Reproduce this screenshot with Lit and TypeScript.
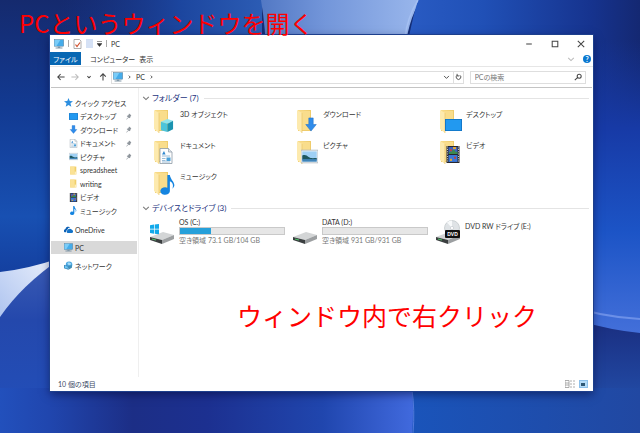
import { LitElement, html, svg, css, nothing } from "lit";
import { customElement, property } from "lit/decorators.js";
import { classMap } from "lit/directives/class-map.js";
import { styleMap } from "lit/directives/style-map.js";

const note = svg`<path fill="#1484e0" d="M7.500 0v10.200A3.800 3 0 1 0 9.500 13V5c2.400 1.200 3 3 2 6C15.800 7 10 4.500 9.500 0z"/>`;
const arrow = svg`<path fill="#2f8ceb" stroke="#1f6fc8" stroke-width=".6" d="M5.500 1h5v7H14l-6 7-6-7h3.500z"/>`;
const film = svg`
  <rect x="1.500" y="0" width="13" height="16" fill="#26262e"/>
  <path d="M2.500.500v15M13.500.500v15" stroke="#c9c9c0" stroke-width="1" stroke-dasharray="1 1.200"/>
  <rect x="3.500" y="1" width="9" height="6.500" fill="#3a62c4"/><rect x="3.500" y="8.500" width="9" height="6.500" fill="#3b78d8"/>
  <path d="M4 5.500h3V4h3v1.500h2.500v2H4z" fill="#3c8a4c"/><path d="M8 1h3v2H8zM5 12h2v2H5z" fill="#d9a33c"/>
  <path d="M5 3h2v2H5zM9 10h2v2H9z" fill="#c3453d"/>`;
const picture = svg`
  <rect x="0" y="2" width="16" height="12" fill="#f4f6f8" stroke="#a9b2ba" stroke-width=".7"/>
  <rect x="1.200" y="3.200" width="13.600" height="9.600" fill="#9fd0f5"/>
  <path d="M1.200 7c3-1 4 0 6 1.500s4 1 7.600 1v1.500H1.200z" fill="#1f5860"/><path d="M1.200 10.500h13.600v2.300H1.200z" fill="#3f83b8"/>`;
const page = svg`
  <path d="M2 .5h8.500L14 4v11.500H2z" fill="#fdfdfd" stroke="#8d9aa6" stroke-width=".8"/>
  <path d="M10.500.5V4H14" fill="#dfe6ec" stroke="#8d9aa6" stroke-width=".7"/>
  <path d="M4 6.500L6 3l1.500 3.500z" fill="#2d86cf"/><path d="M4 8h8M4 10.500h3.500M4 12.500h3.500M4 14h8" stroke="#8fb4d4" stroke-width=".9"/>
  <rect x="8.500" y="9.500" width="4" height="3.500" fill="#4aa0d8"/>`;
const yellow = svg`<path fill="#f0cf6a" d="M2 1h11v14H2z"/><path fill="#fbe295" d="M2 1h8v14H2z"/><path fill="#fdeebb" d="M10 10h3v5h-3z"/>`;
const monitor = svg`
  <rect x=".5" y="1" width="15" height="10.500" fill="#45acea" stroke="#5b7f98" stroke-width=".8"/>
  <path d="M1 1.500h9L4 11H1z" fill="#7accf8"/><path d="M6 12h4v1.500h3.500V15h-11v-1.500H6z" fill="#8298a8"/>`;
const desktop = svg`<rect x="0" y="2" width="16" height="12" fill="#1173c4"/><rect x=".8" y="2.800" width="14.400" height="10.400" fill="#2299f0"/>`;
const cube = svg`<path fill="#8fe4ee" d="M2 4l7-3 6 2-6 3z"/><path fill="#4cc4da" d="M2 4l7 2v9l-7-2z"/><path fill="#1b93b0" d="M9 6l6-3v9l-6 3z"/>`;
const star = svg`<path fill="#2d8fe0" d="M8 0l2.200 5.300 5.800.4-4.500 3.800L13 15.500l-5-3.200-5 3.200 1.500-6L0 5.700l5.800-.4z"/>`;
const cloud = svg`<path fill="#0c5fb4" d="M1 13a3.500 3.500 0 0 1 1.500-6A5 5 0 0 1 11 4.500a5 5 0 0 0-5 4A4 4 0 0 0 4 13z"/><path fill="#1473c8" d="M6 14a3 3 0 0 1 .5-5A4.500 4.500 0 0 1 14 8.600 2.900 2.900 0 0 1 14.500 14z"/>`;
const network = svg`<circle cx="9" cy="6.500" r="5.800" fill="#4ba7e0"/><path d="M6 3.500c3-2 5 0 7 1l-2 3-4-1z" fill="#a3dbf8"/><path d="M0 7l8 2v6.500L0 13z" fill="#2e7fb4"/><path d="M1.200 8.500l5.600 1.400v3.800l-5.600-1.400z" fill="#6fc6f2"/><path d="M8 9l6-2v5l-6 3.500z" fill="#3f8eb8"/>`;

const glyphs: Record<string, unknown> = { note, arrow, film, picture, page, yellow, monitor, desktop, cube, star, cloud, network };

@customElement("file-icon")
class FileIcon extends LitElement {
  @property() name = "page";
  static styles = css`
    :host { display: inline-flex; flex: none; width: 9px; height: 9px; }
    svg { width: 100%; height: 100%; display: block; }
  `;
  render() {
    return html`<svg viewBox="0 0 16 16" preserveAspectRatio="none" aria-hidden="true">${glyphs[this.name]}</svg>`;
  }
}

/* Where each badge lies on the folder: x, y, width, height. */
const badges: Record<string, number[]> = {
  cube: [7, 9, 15, 15],
  arrow: [9, 8, 14, 15],
  desktop: [7, 8, 17, 16],
  page: [6, 8, 16, 16],
  picture: [6, 8, 17, 17],
  film: [7, 6, 16, 17],
  note: [6, 4, 20, 20],
};

@customElement("folder-icon")
class FolderIcon extends LitElement {
  @property() name = "page";
  static styles = css`
    :host { display: block; flex: none; width: 24px; height: 25px; }
    svg { display: block; }
  `;
  render() {
    const [x, y, w, h] = badges[this.name];
    return html`<svg width="24" height="25" viewBox="0 0 24 25" aria-hidden="true">
      <path d="M3 1h13v21H3z" fill="#efcc6c"/>
      <path d="M3 1l12 1v19H6z" fill="#f9dd8c"/>
      <path d="M2 1l5 3v20l-5-4z" fill="#fdeaae"/>
      <path d="M7 4v20" stroke="#e8c467" stroke-width=".7"/>
      <svg x=${x} y=${y} width=${w} height=${h} viewBox="0 0 16 16" preserveAspectRatio="none">${glyphs[this.name]}</svg>
    </svg>`;
  }
}

@customElement("drive-icon")
class DriveIcon extends LitElement {
  @property() kind = "plain";
  static styles = css`
    :host { display: block; flex: none; width: 26px; height: 25px; }
    svg { display: block; }
    .disc { font: bold 5px "Liberation Sans", sans-serif; fill: #fff; }
  `;
  render() {
    return html`<svg width="26" height="25" viewBox="0 0 26 25" aria-hidden="true">
      <path d="M1 17l13-5 11 3-12 5z" fill="#d3d5d6"/>
      <path d="M1 17l12 3v4L1 20z" fill="#3b3f40"/>
      <path d="M13 20l12-5v4l-12 5z" fill="#9c9fa1"/>
      <path d="M3 19l4 1" stroke="#4ec46a" stroke-width="1"/>
      ${this.kind === "system" ? svg`<path fill="#12a9ea" d="M1 5.200l4-.6v4.200H1zM5.700 4.500L10 4v4.800H5.700zM1 9.500h4v4.200l-4-.6zM5.700 9.500H10v4.800l-4.300-.5z"/>` : nothing}
      ${this.kind === "dvd" ? svg`
        <circle cx="17" cy="8" r="7.500" fill="#dfe3e6" stroke="#b6bcc0" stroke-width=".6"/>
        <path d="M17 8L12 2.500a7 7 0 0 1 5-2z" fill="#f8fafb"/>
        <circle cx="17" cy="8" r="1.600" fill="#fff" stroke="#b6bcc0" stroke-width=".5"/>
        <rect x="10" y="10" width="15" height="8" rx="1" fill="#111"/>
        <text class="disc" x="17.500" y="16" text-anchor="middle">DVD</text>` : nothing}
    </svg>`;
  }
}

interface Place { label: string; icon: string; pinned?: boolean }

const places: Place[] = [
  { label: "デスクトップ", icon: "desktop", pinned: true },
  { label: "ダウンロード", icon: "arrow", pinned: true },
  { label: "ドキュメント", icon: "page", pinned: true },
  { label: "ピクチャ", icon: "picture", pinned: true },
  { label: "spreadsheet", icon: "yellow" },
  { label: "writing", icon: "yellow" },
  { label: "ビデオ", icon: "film" },
  { label: "ミュージック", icon: "note" },
];

const folders: Place[] = [
  { label: "3D オブジェクト", icon: "cube" },
  { label: "ダウンロード", icon: "arrow" },
  { label: "デスクトップ", icon: "desktop" },
  { label: "ドキュメント", icon: "page" },
  { label: "ピクチャ", icon: "picture" },
  { label: "ビデオ", icon: "film" },
  { label: "ミュージック", icon: "note" },
];

const drives = [
  { label: "OS (C:)", kind: "system", used: 30, free: "空き領域 73.1 GB/104 GB" },
  { label: "DATA (D:)", kind: "plain", used: 0, free: "空き領域 931 GB/931 GB" },
  { label: "DVD RW ドライブ (E:)", kind: "dvd" },
];

const line = (d: string) => html`<svg class="line" viewBox="0 0 10 10" aria-hidden="true"><path d=${d}/></svg>`;
const chevron = "M1.500 3.500L5 7l3.500-3.500";

@customElement("app-root")
class AppRoot extends LitElement {
  static styles = css`
    :host {
      display: flex; position: relative; box-sizing: border-box; min-height: 100vh;
      padding: 35px 47px 42px 50px; overflow: hidden; background: #1740a4;
      font: 7px/10px "Lato", "Noto Sans CJK JP", sans-serif; font-feature-settings: "palt"; color: #333;
    }
    * { box-sizing: border-box; }
    button, input { font: inherit; font-feature-settings: inherit; color: inherit; background: none; border: 0; padding: 0; margin: 0; }
    a { color: inherit; text-decoration: none; }
    ul, h2, p { margin: 0; padding: 0; list-style: none; font-weight: 400; }
    .wallpaper { position: absolute; inset: 0; width: 100%; height: 100%; }
    .window {
      position: relative; flex: 1; display: flex; flex-direction: column; background: #fff;
      box-shadow: 0 0 0 1px #1d3f8c, 0 3px 9px rgba(0, 5, 50, .55);
    }
    .line { width: 8px; height: 8px; flex: none; display: block; fill: none; stroke: #444; stroke-width: 1.300; }
    .faint .line { stroke: #bbb; }
    .title { display: flex; align-items: center; height: 17px; padding: 0 4px; }
    .quick { display: flex; align-items: center; gap: 4px; flex: 1; }
    .big { width: 10px; height: 10px; }
    .bar { width: 1px; height: 7px; background: #aaa; }
    .blank { width: 7px; height: 9px; background: #d5e1f5; }
    .controls { display: flex; gap: 18px; padding-right: 4px; }
    .tabs { display: flex; height: 15px; border-bottom: 1px solid #e6e6e6; padding-right: 2px; }
    .tab { padding: 0 4px 0 9px; }
    .file { width: 31px; padding: 0; margin-bottom: 1px; background: #0767b3; color: #fff; }
    .view { padding: 0; }
    .help { display: flex; align-items: center; gap: 8px; margin-left: auto; }
    .round { width: 8px; height: 8px; border-radius: 50%; background: #0a78d0; color: #fff; font-weight: 700; line-height: 8px; text-align: center; }
    .nav { display: flex; align-items: center; height: 21px; padding: 0 6px; border-bottom: 1px solid #c4c4c4; margin: 0 1px; }
    .steps { display: flex; gap: 6px; padding-right: 4px; }
    .address, .search { display: flex; align-items: center; height: 13px; border: 1px solid #dedede; }
    .address { flex: 1; gap: 3px; padding-left: 1px; }
    .address .line { width: 7px; }
    .grow { flex: 1; }
    .reload { align-self: stretch; display: flex; align-items: center; padding: 0 1px; border-left: 1px solid #dedede; }
    .search { width: 22%; margin-left: 6px; padding: 0 3px 0 4px; }
    .search input { flex: 1; min-width: 0; outline: 0; }
    .search input::placeholder { color: #777; opacity: 1; }
    .body { flex: 1; display: flex; }
    .side { width: 89px; flex: none; padding: 8px 1px 0; border-right: 1px solid #efefef; }
    .quicklist { display: grid; grid-auto-rows: 1fr; height: 122px; }
    .place { display: flex; align-items: center; gap: 2px; height: 13px; padding: 0 5px 0 13px; }
    .child { padding-left: 18px; }
    .pin { margin-left: auto; width: 6px; height: 7px; }
    .roots { display: grid; gap: 5px; padding-top: 5px; }
    .current { background: #d9d9d9; }
    .main { flex: 1; min-width: 0; padding: 5px 4px 0 3px; }
    .group { display: flex; align-items: center; gap: 2px; font-size: 8px; color: #26357e; }
    .group .line { stroke: #777; }
    .group::after { content: ""; flex: 1; height: 1px; margin-left: 3px; background: #e4e4e4; }
    .grid { display: grid; grid-template-columns: repeat(3, 1fr); padding: 0 8px 0 10px; }
    .folders { grid-auto-rows: 31px; padding-top: 6px; padding-bottom: 1px; }
    .drives { padding-top: 4px; }
    .item { display: flex; gap: 4px; min-width: 0; }
    .drive { padding-top: 3px; margin-left: -3px; }
    .info { width: 106px; flex: none; margin-top: -3px; }
    .solo { padding-top: 4px; }
    .track { height: 8px; background: #e6e6e6; border: 1px solid #c9c9c9; }
    .fill { height: 100%; background: #26a0da; }
    .free { color: #777; }
    .status { display: flex; align-items: center; height: 14px; padding: 0 5px 0 8px; gap: 4px; color: #3b4a66; }
    .status p { flex: 1; }
    .caption {
      position: absolute; color: #f00; font: 400 25px/30px "Noto Sans CJK JP", sans-serif;
      font-feature-settings: normal; white-space: nowrap;
    }
    .first { left: 19px; top: 8px; font-size: 24px; }
    .second { left: 237px; top: 300px; }
  `;

  private place(p: Place, child: boolean, current = false) {
    return html`<a href="#" class=${classMap({ place: true, child, current })}>
      <file-icon name=${p.icon}></file-icon><span>${p.label}</span>
      ${p.pinned ? html`<svg class="pin" viewBox="0 0 10 12" aria-hidden="true"><path d="M5 1l4 3-1 1-1 3-2 1-4-4 3-1z" fill="#8d949b"/><path d="M3 8l-2 3" stroke="#8d949b" stroke-width="1.200"/></svg>` : nothing}
    </a>`;
  }

  private wallpaper() {
    return html`<svg class="wallpaper" viewBox="0 0 640 433" preserveAspectRatio="none" aria-hidden="true">
      <defs>
        <linearGradient id="left" x1="0" y1="0" x2="0" y2="1"><stop offset="0" stop-color="#152a6e"/><stop offset=".25" stop-color="#123a92"/><stop offset=".5" stop-color="#1850b2"/><stop offset=".63" stop-color="#1440a0"/></linearGradient>
        <linearGradient id="top" x1="0" y1="0" x2="1" y2="0"><stop offset="0" stop-color="#183488" stop-opacity="0"/><stop offset=".6" stop-color="#1c469f"/><stop offset="1" stop-color="#2c5cb4"/></linearGradient>
        <linearGradient id="glow" x1="0" y1="0" x2="1" y2="0"><stop offset="0" stop-color="#5278c4"/><stop offset=".4" stop-color="#7396da"/><stop offset="1" stop-color="#9ab7ec"/></linearGradient>
        <linearGradient id="right" x1="0" y1="0" x2="1" y2="0"><stop offset="0" stop-color="#2a5cc4"/><stop offset=".35" stop-color="#2050b6"/><stop offset=".8" stop-color="#16338e"/><stop offset="1" stop-color="#142872"/></linearGradient>
        <linearGradient id="strip" x1="0" y1="0" x2="0" y2="1"><stop offset="0" stop-color="#1638a0" stop-opacity="0"/><stop offset=".3" stop-color="#173aa6"/><stop offset=".65" stop-color="#1c54c6"/><stop offset="1" stop-color="#4470da"/></linearGradient>
        <linearGradient id="under" x1="0" y1="0" x2="1" y2="0"><stop offset="0" stop-color="#2250bc"/><stop offset=".12" stop-color="#2046ae"/><stop offset=".32" stop-color="#1c2e86"/><stop offset=".5" stop-color="#1c3090"/><stop offset=".78" stop-color="#2046ae"/><stop offset="1" stop-color="#416ade"/></linearGradient>
        <linearGradient id="floor" x1="0" y1="0" x2="1" y2="0"><stop offset="0" stop-color="#1a54ba"/><stop offset="1" stop-color="#2148a2"/></linearGradient>
        <linearGradient id="corner" x1="0" y1="0" x2="0" y2="1"><stop offset="0" stop-color="#1a2e80"/><stop offset="1" stop-color="#2148a2"/></linearGradient>
        <linearGradient id="wedge" x1="0" y1="1" x2="1" y2="0"><stop offset="0" stop-color="#a9c0ee"/><stop offset="1" stop-color="#eef3fd"/></linearGradient>
        <linearGradient id="ball" x1="0" y1="0" x2="0" y2="1"><stop offset="0" stop-color="#3c5cb4"/><stop offset=".35" stop-color="#2448ac"/><stop offset="1" stop-color="#2250bc"/></linearGradient>
      </defs>
      <rect width="640" height="433" fill="url(#left)"/>
      <rect x="60" width="202" height="90" fill="url(#top)"/>
      <path d="M261 0h160q-14 20-17 60H266q0-30-5-60z" fill="url(#glow)"/>
      <path d="M418 0h222v200H400q-4-130 18-200z" fill="url(#right)"/>
      <path d="M418 0q-11 18-13 38" fill="none" stroke="#a5c0f2" stroke-width="1.500"/>
      <rect x="560" y="40" width="80" height="295" fill="url(#strip)"/>
      <path d="M560 303q40 14 80 16" fill="none" stroke="#6c90e8" stroke-width="2"/>
      <path d="M0 272q28-3 60-14v30L0 330z" fill="url(#wedge)"/>
      <path d="M0 317q22-32 60-58v174H0z" fill="url(#ball)"/>
      <rect y="388" width="414" height="45" fill="url(#under)"/>
      <path d="M580 321q30 9 60 12v58h-60z" fill="url(#corner)"/>
      <path d="M412 388h228v45H412q2-23 0-45z" fill="url(#floor)"/>
      <path d="M412 390q3 20 1 43" fill="none" stroke="#5079dc" stroke-width="1"/>
    </svg>`;
  }

  render() {
    return html`
      ${this.wallpaper()}
      <section class="window" aria-label="PC">
        <header class="title">
          <div class="quick">
            <file-icon class="big" name="monitor"></file-icon><i class="bar"></i>
            <svg width="9" height="10" viewBox="0 0 9 10" aria-hidden="true"><path d="M1 .5h5.500L8 2v7.500H1z" fill="#fff" stroke="#999" stroke-width=".8"/><path d="M2.500 5.500L4 7.500l3-4" fill="none" stroke="#d0502c" stroke-width="1.200"/></svg>
            <i class="blank"></i>
            <svg width="5" height="6" viewBox="0 0 5 6" aria-hidden="true"><path d="M0 .5h5M0 2.500h5L2.500 5.500z" fill="#333" stroke="#333" stroke-width=".5"/></svg>
            <i class="bar"></i><span>PC</span>
          </div>
          <div class="controls">
            <button aria-label="最小化">${line("M1.500 5h7")}</button>
            <button aria-label="最大化">${line("M1.500 1.500h7v7h-7z")}</button>
            <button aria-label="閉じる">${line("M1 1l8 8M9 1L1 9")}</button>
          </div>
        </header>
        <nav class="tabs">
          <button class="tab file">ファイル</button>
          <button class="tab">コンピューター</button>
          <button class="tab view">表示</button>
          <div class="help faint"><button aria-label="リボンを展開">${line(chevron)}</button><button class="round" aria-label="ヘルプ">?</button></div>
        </nav>
        <div class="nav">
          <div class="steps">
            <button aria-label="戻る">${line("M9.500 5H1M4.500 1.500L1 5l3.500 3.500")}</button>
            <button class="faint" aria-label="進む">${line("M.5 5H9M5.500 1.500L9 5 5.500 8.500")}</button>
            <button aria-label="履歴">${line("M3 4l2 2 2-2")}</button>
            <button aria-label="上へ">${line("M5 9.500V1M1.500 4.500L5 1l3.500 3.500")}</button>
          </div>
          <div class="address">
            <file-icon class="big" name="monitor"></file-icon>
            ${line("M4 3l2 2-2 2")}<button>PC</button>${line("M4 3l2 2-2 2")}
            <span class="grow"></span>
            <button aria-label="以前の場所">${line(chevron)}</button>
            <button class="reload" aria-label="更新">${line("M3 2.500A3.300 3.300 0 1 0 7 2.500M3 .5v3h3")}</button>
          </div>
          <label class="search"><input type="text" aria-label="PCの検索" placeholder="PCの検索">${line("M4 6L1 9M4 4a2.500 2.500 0 1 0 5 0 2.500 2.500 0 1 0-5 0")}</label>
        </div>
        <div class="body">
          <nav class="side">
            <div class="quicklist">
              ${this.place({ label: "クイック アクセス", icon: "star" }, false)}
              ${places.map((p) => this.place(p, true))}
            </div>
            <div class="roots">
              ${this.place({ label: "OneDrive", icon: "cloud" }, false)}
              ${this.place({ label: "PC", icon: "monitor" }, false, true)}
              ${this.place({ label: "ネットワーク", icon: "network" }, false)}
            </div>
          </nav>
          <main class="main">
            <h2 class="group">${line(chevron)}フォルダー (7)</h2>
            <div class="grid folders">
              ${folders.map((f) => html`<a class="item" href="#"><folder-icon name=${f.icon}></folder-icon><span>${f.label}</span></a>`)}
            </div>
            <h2 class="group">${line(chevron)}デバイスとドライブ (3)</h2>
            <div class="grid drives">
              ${drives.map((d) => html`<a class="item drive" href="#"><drive-icon kind=${d.kind}></drive-icon>
                <div class=${classMap({ info: true, solo: !d.free })}>
                  <p>${d.label}</p>
                  ${d.free ? html`<div class="track"><div class="fill" style=${styleMap({ width: `${d.used}%` })}></div></div><p class="free">${d.free}</p>` : nothing}
                </div></a>`)}
            </div>
          </main>
        </div>
        <footer class="status">
          <p>10 個の項目</p>
          <svg width="10" height="8" viewBox="0 0 10 8" aria-hidden="true"><path d="M0 .5h4v7H0zM0 3h4M0 5h4M5 1h2M8 1h2M5 4h2M8 4h2M5 7h2M8 7h2" fill="none" stroke="#999" stroke-width=".8"/></svg>
          <svg width="9" height="8" viewBox="0 0 9 8" aria-hidden="true"><rect x=".5" y=".5" width="8" height="7" fill="#b5dcf8" stroke="#8cc0ea"/><path d="M2 3h4v3H2z" fill="#2e5876"/></svg>
        </footer>
      </section>
      <div class="caption first">PCというウィンドウを開く</div>
      <div class="caption second">ウィンドウ内で右クリック</div>
    `;
  }
}
